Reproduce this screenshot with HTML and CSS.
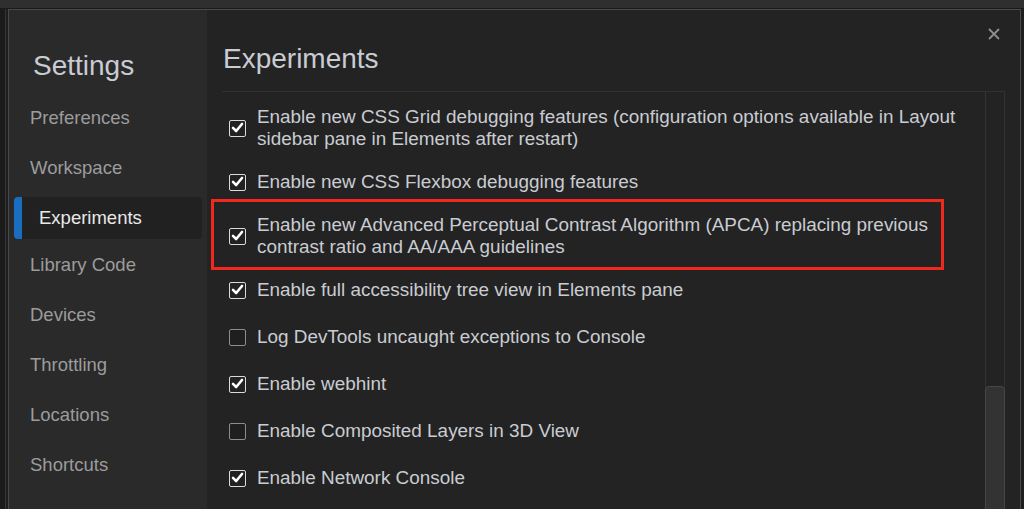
FILE: index.html
```html
<!DOCTYPE html>
<html>
<head>
<meta charset="utf-8">
<link rel="stylesheet" href="styles.css">
</head>
<body>
<div class="topstrip"></div>
<div class="stage">
  <div class="dialog">
    <aside class="sidebar">
      <h1 class="title">Settings</h1>
      <nav class="nav">
        <div class="nav-item">Preferences</div>
        <div class="nav-item">Workspace</div>
        <div class="nav-item selected">Experiments</div>
        <div class="nav-item">Library Code</div>
        <div class="nav-item">Devices</div>
        <div class="nav-item">Throttling</div>
        <div class="nav-item">Locations</div>
        <div class="nav-item">Shortcuts</div>
      </nav>
    </aside>
    <main class="main">
      <button class="close" aria-label="Close">
        <svg width="12" height="12" viewBox="0 0 12 12"><path d="M1 1L11 11M11 1L1 11" stroke="#8e8e8e" stroke-width="1.8" fill="none"/></svg>
      </button>
      <header class="header"><h2 class="heading">Experiments</h2></header>
      <div class="content">
        <div class="list">
          <div class="row">
            <span class="cb checked"><svg viewBox="0 0 17 17"><path d="M4 8.8L7.2 12L13 5" stroke="#fff" stroke-width="2.6" fill="none" stroke-linecap="round" stroke-linejoin="round"/></svg></span>
            <span class="label">Enable new CSS Grid debugging features (configuration options available in Layout sidebar pane in Elements after restart)</span>
          </div>
          <div class="row">
            <span class="cb checked"><svg viewBox="0 0 17 17"><path d="M4 8.8L7.2 12L13 5" stroke="#fff" stroke-width="2.6" fill="none" stroke-linecap="round" stroke-linejoin="round"/></svg></span>
            <span class="label">Enable new CSS Flexbox debugging features</span>
          </div>
          <div class="row highlighted">
            <span class="cb checked"><svg viewBox="0 0 17 17"><path d="M4 8.8L7.2 12L13 5" stroke="#fff" stroke-width="2.6" fill="none" stroke-linecap="round" stroke-linejoin="round"/></svg></span>
            <span class="label">Enable new Advanced Perceptual Contrast Algorithm (APCA) replacing previous contrast ratio and AA/AAA guidelines</span>
            <span class="redbox"></span>
          </div>
          <div class="row">
            <span class="cb checked"><svg viewBox="0 0 17 17"><path d="M4 8.8L7.2 12L13 5" stroke="#fff" stroke-width="2.6" fill="none" stroke-linecap="round" stroke-linejoin="round"/></svg></span>
            <span class="label">Enable full accessibility tree view in Elements pane</span>
          </div>
          <div class="row">
            <span class="cb"></span>
            <span class="label">Log DevTools uncaught exceptions to Console</span>
          </div>
          <div class="row">
            <span class="cb checked"><svg viewBox="0 0 17 17"><path d="M4 8.8L7.2 12L13 5" stroke="#fff" stroke-width="2.6" fill="none" stroke-linecap="round" stroke-linejoin="round"/></svg></span>
            <span class="label">Enable webhint</span>
          </div>
          <div class="row">
            <span class="cb"></span>
            <span class="label">Enable Composited Layers in 3D View</span>
          </div>
          <div class="row">
            <span class="cb checked"><svg viewBox="0 0 17 17"><path d="M4 8.8L7.2 12L13 5" stroke="#fff" stroke-width="2.6" fill="none" stroke-linecap="round" stroke-linejoin="round"/></svg></span>
            <span class="label">Enable Network Console</span>
          </div>
        </div>
        <div class="scrollbar"><div class="thumb"></div></div>
      </div>
    </main>
  </div>
</div>
</body>
</html>
```

FILE: styles.css
```css
html, body {
  margin: 0;
  padding: 0;
}
body {
  width: 1024px;
  height: 509px;
  overflow: hidden;
  background: #1e1e1e;
  font-family: "Liberation Sans", Arial, sans-serif;
}
.topstrip {
  height: 8px;
  background: #2f2f2f;
  border-bottom: 1px solid #1a1a1a;
}
.stage {
  width: 1024px;
  box-sizing: border-box;
  border-left: 5px solid #1b1b1b;
  padding: 0 4px 0 2px;
  box-shadow: inset 1px 0 0 #353535;
}
.dialog {
  margin-left: 1px;
  width: 1011px;
  height: 540px;
  border: 1px solid #4a4a4a;
  display: grid;
  grid-template-columns: 198px 1fr;
  background: #232323;
}
.sidebar {
  background: #2a2a2a;
  padding-top: 40px;
}
.title {
  margin: 0 0 11px 24px;
  font-size: 28px;
  line-height: 32px;
  font-weight: normal;
  color: #c9ccd2;
}
.nav {
  display: flex;
  flex-direction: column;
}
.nav-item {
  height: 42px;
  margin: 4px 5px;
  padding-left: 16px;
  display: flex;
  align-items: center;
  font-size: 18.5px;
  color: #9c9c9c;
  border-radius: 4px;
}
.nav-item.selected {
  background: #212121;
  border-left: 8px solid #1a6ec2;
  padding-left: 17px;
  margin-bottom: 1px;
  color: #e8e8e8;
}
.main {
  position: relative;
  padding: 33px 15px 0 15px;
}
.close {
  position: absolute;
  top: 18px;
  right: 20px;
  width: 12px;
  height: 12px;
  padding: 0;
  border: 0;
  background: none;
  display: block;
}
.close svg {
  display: block;
}
.header {
  border-bottom: 1px solid #313131;
  padding: 0 0 16px 0;
}
.heading {
  margin: 0 0 0 1px;
  font-size: 28px;
  line-height: 32px;
  font-weight: normal;
  color: #c9ccd2;
}
.content {
  display: flex;
}
.list {
  flex: 1;
  padding-top: 5.5px;
}
.row {
  position: relative;
  display: flex;
  align-items: center;
  gap: 11px;
  min-height: 30px;
  padding: 8.5px 0 8.5px 7px;
}
.label {
  font-size: 18.9px;
  line-height: 22px;
  color: #c9ccd2;
  max-width: 715px;
}
.cb {
  flex: none;
  width: 17px;
  height: 17px;
  box-sizing: border-box;
  border: 1.5px solid #8d8d8d;
  border-radius: 2px;
  background: #1f1f1f;
  position: relative;
}
.cb.checked {
  border-color: #dadada;
  background: #222;
}
.cb svg {
  position: absolute;
  left: -1.5px;
  top: -1.5px;
  width: 17px;
  height: 17px;
}
.redbox {
  position: absolute;
  left: -11px;
  top: -6.5px;
  width: 733px;
  height: 71px;
  box-sizing: border-box;
  border: 3px solid #f0281d;
}
.scrollbar {
  width: 20px;
  height: 440px;
  box-sizing: border-box;
  border: 1px solid #333;
  border-top: 0;
  position: relative;
}
.thumb {
  margin-top: 294px;
  margin-left: -1px;
  width: 20px;
  height: 140px;
  box-sizing: border-box;
  background: #333;
  border: 1px solid #464646;
  border-radius: 4px 4px 0 0;
}
```
